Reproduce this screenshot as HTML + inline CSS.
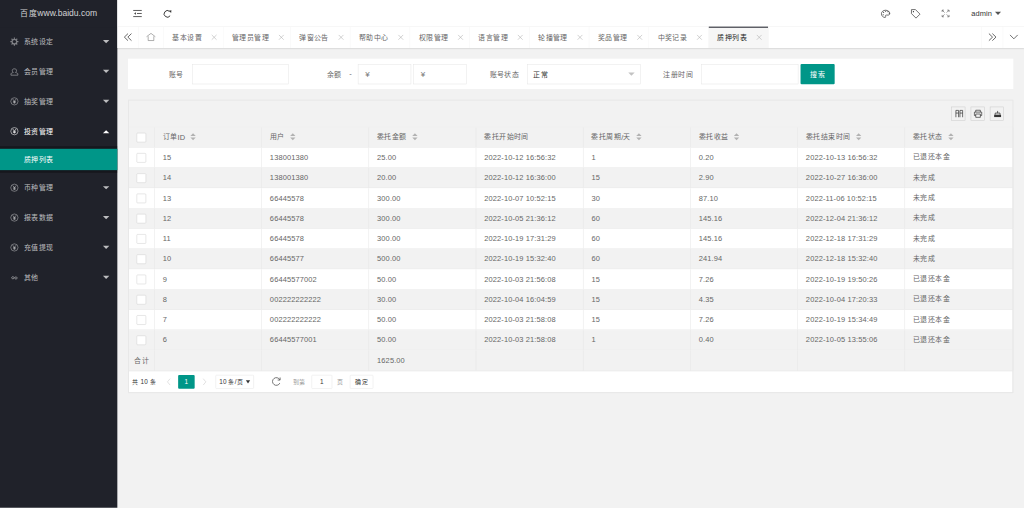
<!DOCTYPE html><html lang="zh-CN"><head><meta charset="utf-8"><style>
html,body{margin:0;padding:0;width:1024px;height:508px;overflow:hidden;background:#f2f2f2;}
#root{position:absolute;left:0;top:0;width:1920px;height:952px;transform:scale(0.533333);transform-origin:0 0;background:#f2f2f2;font-family:"Liberation Sans",sans-serif;font-size:14px;color:#666;}
.k{font-size:0.9286em;letter-spacing:0.0714em;position:relative;top:0;}
.cell .k{top:-0.8px;}
span{white-space:nowrap;}
.n{letter-spacing:0.22px;}
#logo .n{letter-spacing:0;}
#side{position:absolute;left:0;top:0;width:220px;height:952px;background:#20222a;}
#logo{position:absolute;left:0;top:0;width:220px;height:50px;line-height:50px;text-align:center;color:rgba(255,255,255,.8);font-size:16px;box-shadow:0 1px 2px 0 rgba(0,0,0,.15);}
.nav{position:absolute;left:0;width:220px;height:56px;line-height:56px;color:rgba(255,255,255,.7);}
.nav .t{position:absolute;left:45px;top:0;}
.caret{position:absolute;right:15px;top:25px;width:0;height:0;border:6px solid transparent;border-top-color:rgba(255,255,255,.7);border-bottom:none;}
.caret.up{border-top:none;border-bottom:6px solid #fff;top:26px;}
#child{position:absolute;left:0;top:274px;width:220px;height:50px;background:rgba(0,0,0,.3);}
#child .dd{position:absolute;left:0;top:5px;width:220px;height:40px;line-height:40px;background:#009688;color:#fff;}
#child .dd > span{position:absolute;left:45px;}
#header{position:absolute;left:220px;top:0;width:1700px;height:50px;background:#fff;border-bottom:1px solid #f6f6f6;box-sizing:border-box;}
#tabs{position:absolute;left:220px;top:50px;width:1700px;height:40px;background:#fff;box-shadow:0 1px 2px 0 rgba(0,0,0,.1);}
.tab{position:absolute;top:0;height:40px;line-height:40px;border-right:1px solid #f6f6f6;box-sizing:border-box;color:#666;}
.tab .t{position:absolute;left:16px;top:0;white-space:nowrap;}
.tab.sel{background:#f6f6f6;color:#222;}
.tab.sel:after{content:'';position:absolute;left:0;top:0;width:100%;height:2px;background:#292b34;}
.ctl{position:absolute;top:0;width:40px;height:40px;box-sizing:border-box;}
.card{position:absolute;background:#fff;}
.lbl{position:absolute;top:129px;line-height:20px;color:#666;white-space:nowrap;}
.inp{position:absolute;top:120px;height:38px;border:1px solid #e6e6e6;box-sizing:border-box;background:#fff;}
.btn{position:absolute;background:#009688;color:#fff;border-radius:2px;text-align:center;}
#tbl{position:absolute;left:240px;top:187px;width:1660px;height:550px;border:1px solid #e6e6e6;box-sizing:border-box;background:#fff;}
.row{position:absolute;left:0;width:1658px;height:37px;border-bottom:1px solid #e6e6e6;}
.cell{position:absolute;top:0;height:37px;line-height:37px;border-right:1px solid #e6e6e6;box-sizing:border-box;padding-left:16px;white-space:nowrap;}
.cb{position:absolute;left:15px;top:10px;width:18px;height:18px;border:1px solid #d2d2d2;box-sizing:border-box;background:#fff;border-radius:2px;}
.sort{display:inline-block;position:relative;width:10px;height:20px;margin-left:5px;vertical-align:middle;top:-1px;}
.sort:before{content:'';position:absolute;left:5px;top:2.5px;border:5px solid transparent;border-top:none;border-bottom-color:#b2b2b2;}
.sort:after{content:'';position:absolute;left:5px;bottom:4.5px;border:5px solid transparent;border-bottom:none;border-top-color:#b2b2b2;}
.tool-i{position:absolute;width:26px;height:26px;border:1px solid #ccc;box-sizing:border-box;}
.pg{position:absolute;font-size:12px;line-height:26px;top:702.5px;white-space:nowrap;color:#333;}
#icons{position:absolute;left:0;top:0;width:1920px;height:952px;overflow:visible;}
</style></head><body><div id="root"><div id="side"><div id="logo"><span class="k">百度</span><span class="n">www.baidu.com</span></div><div class="nav" style="top:50px;color:rgba(255,255,255,.7)"><span class="t"><span class="k">系统设定</span></span><i class="caret"></i></div><div class="nav" style="top:106px;color:rgba(255,255,255,.7)"><span class="t"><span class="k">会员管理</span></span><i class="caret"></i></div><div class="nav" style="top:162px;color:rgba(255,255,255,.7)"><span class="t"><span class="k">抽奖管理</span></span><i class="caret"></i></div><div class="nav" style="top:218px;color:#fff"><span class="t"><span class="k">投资管理</span></span><i class="caret up"></i></div><div class="nav" style="top:324px;color:rgba(255,255,255,.7)"><span class="t"><span class="k">币种管理</span></span><i class="caret"></i></div><div class="nav" style="top:380px;color:rgba(255,255,255,.7)"><span class="t"><span class="k">报表数据</span></span><i class="caret"></i></div><div class="nav" style="top:436px;color:rgba(255,255,255,.7)"><span class="t"><span class="k">充值提现</span></span><i class="caret"></i></div><div class="nav" style="top:492px;color:rgba(255,255,255,.7)"><span class="t"><span class="k">其他</span></span><i class="caret"></i></div><div id="child"><div class="dd"><span><span class="k">质押列表</span></span></div></div></div><div id="header"><span style="position:absolute;left:1601px;top:0;line-height:50px;color:#333"><span class="n">admin</span></span></div><div id="tabs"><div class="ctl" style="left:0;border-right:1px solid #f6f6f6"></div><div class="tab" style="left:40px;width:47px"></div><div class="tab" style="left:87px;width:112px"><span class="t"><span class="k">基本设置</span></span></div><div class="tab" style="left:199px;width:126px"><span class="t"><span class="k">管理员管理</span></span></div><div class="tab" style="left:325px;width:112px"><span class="t"><span class="k">弹窗公告</span></span></div><div class="tab" style="left:437px;width:112px"><span class="t"><span class="k">帮助中心</span></span></div><div class="tab" style="left:549px;width:112px"><span class="t"><span class="k">权限管理</span></span></div><div class="tab" style="left:661px;width:112px"><span class="t"><span class="k">语言管理</span></span></div><div class="tab" style="left:773px;width:112px"><span class="t"><span class="k">轮播管理</span></span></div><div class="tab" style="left:885px;width:112px"><span class="t"><span class="k">奖品管理</span></span></div><div class="tab" style="left:997px;width:112px"><span class="t"><span class="k">中奖记录</span></span></div><div class="tab sel" style="left:1109px;width:112px"><span class="t"><span class="k">质押列表</span></span></div><div class="ctl" style="left:1620px;border-left:1px solid #f6f6f6"></div><div class="ctl" style="left:1660px;border-left:1px solid #f6f6f6"></div></div><div class="card" style="left:240px;top:110px;width:1660px;height:57px"></div><span class="lbl" style="left:317px"><span class="k">账号</span></span><div class="inp" style="left:360px;width:181px"></div><span class="lbl" style="left:613px"><span class="k">余额</span></span><span class="lbl" style="left:655px;top:127.5px"><span class="n">-</span></span><div class="inp" style="left:671px;width:100px"><span style="position:absolute;left:13px;top:8px;line-height:20px;color:#777;font-size:15px"><span class="n">¥</span></span></div><div class="inp" style="left:775px;width:100px"><span style="position:absolute;left:13px;top:8px;line-height:20px;color:#777;font-size:15px"><span class="n">¥</span></span></div><span class="lbl" style="left:918px"><span class="k">账号状态</span></span><div class="inp" style="left:989px;width:212px"><span style="position:absolute;left:10px;top:8px;line-height:20px;color:#333"><span class="k">正常</span></span><i style="position:absolute;right:10px;top:15px;border:6px solid transparent;border-top:6px solid #c2c2c2;border-bottom:none"></i></div><span class="lbl" style="left:1244px"><span class="k">注册时间</span></span><div class="inp" style="left:1315px;width:182px"></div><div class="btn" style="left:1501px;top:120px;width:64px;height:38px;line-height:38px"><span class="k">搜索</span></div><div id="tbl"><div style="position:absolute;left:0;top:0;width:1658px;height:50px;background:#f2f2f2;border-bottom:1px solid #e6e6e6"></div><div class="tool-i" style="left:1543px;top:12px"></div><div class="tool-i" style="left:1579px;top:12px"></div><div class="tool-i" style="left:1615px;top:12px"></div><div class="row" style="top:51px;background:#f2f2f2;height:37px"><div class="cell" style="left:0;width:49px;height:37px;line-height:37px"><i class="cb"></i></div><div class="cell" style="left:48px;width:202px;height:37px;line-height:37px"><span class="k">订单</span><span class="n">ID</span><i class="sort"></i></div><div class="cell" style="left:249px;width:202px;height:37px;line-height:37px"><span class="k">用户</span><i class="sort"></i></div><div class="cell" style="left:450px;width:202px;height:37px;line-height:37px"><span class="k">委托金额</span><i class="sort"></i></div><div class="cell" style="left:651px;width:202px;height:37px;line-height:37px"><span class="k">委托开始时间</span></div><div class="cell" style="left:852px;width:202px;height:37px;line-height:37px"><span class="k">委托周期</span><span class="n">/</span><span class="k">天</span><i class="sort"></i></div><div class="cell" style="left:1053px;width:202px;height:37px;line-height:37px"><span class="k">委托收益</span><i class="sort"></i></div><div class="cell" style="left:1254px;width:202px;height:37px;line-height:37px"><span class="k">委托结束时间</span><i class="sort"></i></div><div class="cell" style="left:1455px;width:204px;height:37px;line-height:37px"><span class="k">委托状态</span><i class="sort"></i></div></div><div class="row" style="top:89px;background:#fff;height:37px"><div class="cell" style="left:0;width:49px;height:37px;line-height:37px"><i class="cb"></i></div><div class="cell" style="left:48px;width:202px;height:37px;line-height:37px"><span class="n">15</span></div><div class="cell" style="left:249px;width:202px;height:37px;line-height:37px"><span class="n">138001380</span></div><div class="cell" style="left:450px;width:202px;height:37px;line-height:37px"><span class="n">25.00</span></div><div class="cell" style="left:651px;width:202px;height:37px;line-height:37px"><span class="n">2022-10-12 16:56:32</span></div><div class="cell" style="left:852px;width:202px;height:37px;line-height:37px"><span class="n">1</span></div><div class="cell" style="left:1053px;width:202px;height:37px;line-height:37px"><span class="n">0.20</span></div><div class="cell" style="left:1254px;width:202px;height:37px;line-height:37px"><span class="n">2022-10-13 16:56:32</span></div><div class="cell" style="left:1455px;width:204px;height:37px;line-height:37px"><span class="k">已退还本金</span></div></div><div class="row" style="top:127px;background:#f2f2f2;height:37px"><div class="cell" style="left:0;width:49px;height:37px;line-height:37px"><i class="cb"></i></div><div class="cell" style="left:48px;width:202px;height:37px;line-height:37px"><span class="n">14</span></div><div class="cell" style="left:249px;width:202px;height:37px;line-height:37px"><span class="n">138001380</span></div><div class="cell" style="left:450px;width:202px;height:37px;line-height:37px"><span class="n">20.00</span></div><div class="cell" style="left:651px;width:202px;height:37px;line-height:37px"><span class="n">2022-10-12 16:36:00</span></div><div class="cell" style="left:852px;width:202px;height:37px;line-height:37px"><span class="n">15</span></div><div class="cell" style="left:1053px;width:202px;height:37px;line-height:37px"><span class="n">2.90</span></div><div class="cell" style="left:1254px;width:202px;height:37px;line-height:37px"><span class="n">2022-10-27 16:36:00</span></div><div class="cell" style="left:1455px;width:204px;height:37px;line-height:37px"><span class="k">未完成</span></div></div><div class="row" style="top:165px;background:#fff;height:37px"><div class="cell" style="left:0;width:49px;height:37px;line-height:37px"><i class="cb"></i></div><div class="cell" style="left:48px;width:202px;height:37px;line-height:37px"><span class="n">13</span></div><div class="cell" style="left:249px;width:202px;height:37px;line-height:37px"><span class="n">66445578</span></div><div class="cell" style="left:450px;width:202px;height:37px;line-height:37px"><span class="n">300.00</span></div><div class="cell" style="left:651px;width:202px;height:37px;line-height:37px"><span class="n">2022-10-07 10:52:15</span></div><div class="cell" style="left:852px;width:202px;height:37px;line-height:37px"><span class="n">30</span></div><div class="cell" style="left:1053px;width:202px;height:37px;line-height:37px"><span class="n">87.10</span></div><div class="cell" style="left:1254px;width:202px;height:37px;line-height:37px"><span class="n">2022-11-06 10:52:15</span></div><div class="cell" style="left:1455px;width:204px;height:37px;line-height:37px"><span class="k">未完成</span></div></div><div class="row" style="top:203px;background:#f2f2f2;height:37px"><div class="cell" style="left:0;width:49px;height:37px;line-height:37px"><i class="cb"></i></div><div class="cell" style="left:48px;width:202px;height:37px;line-height:37px"><span class="n">12</span></div><div class="cell" style="left:249px;width:202px;height:37px;line-height:37px"><span class="n">66445578</span></div><div class="cell" style="left:450px;width:202px;height:37px;line-height:37px"><span class="n">300.00</span></div><div class="cell" style="left:651px;width:202px;height:37px;line-height:37px"><span class="n">2022-10-05 21:36:12</span></div><div class="cell" style="left:852px;width:202px;height:37px;line-height:37px"><span class="n">60</span></div><div class="cell" style="left:1053px;width:202px;height:37px;line-height:37px"><span class="n">145.16</span></div><div class="cell" style="left:1254px;width:202px;height:37px;line-height:37px"><span class="n">2022-12-04 21:36:12</span></div><div class="cell" style="left:1455px;width:204px;height:37px;line-height:37px"><span class="k">未完成</span></div></div><div class="row" style="top:241px;background:#fff;height:37px"><div class="cell" style="left:0;width:49px;height:37px;line-height:37px"><i class="cb"></i></div><div class="cell" style="left:48px;width:202px;height:37px;line-height:37px"><span class="n">11</span></div><div class="cell" style="left:249px;width:202px;height:37px;line-height:37px"><span class="n">66445578</span></div><div class="cell" style="left:450px;width:202px;height:37px;line-height:37px"><span class="n">300.00</span></div><div class="cell" style="left:651px;width:202px;height:37px;line-height:37px"><span class="n">2022-10-19 17:31:29</span></div><div class="cell" style="left:852px;width:202px;height:37px;line-height:37px"><span class="n">60</span></div><div class="cell" style="left:1053px;width:202px;height:37px;line-height:37px"><span class="n">145.16</span></div><div class="cell" style="left:1254px;width:202px;height:37px;line-height:37px"><span class="n">2022-12-18 17:31:29</span></div><div class="cell" style="left:1455px;width:204px;height:37px;line-height:37px"><span class="k">未完成</span></div></div><div class="row" style="top:279px;background:#f2f2f2;height:37px"><div class="cell" style="left:0;width:49px;height:37px;line-height:37px"><i class="cb"></i></div><div class="cell" style="left:48px;width:202px;height:37px;line-height:37px"><span class="n">10</span></div><div class="cell" style="left:249px;width:202px;height:37px;line-height:37px"><span class="n">66445577</span></div><div class="cell" style="left:450px;width:202px;height:37px;line-height:37px"><span class="n">500.00</span></div><div class="cell" style="left:651px;width:202px;height:37px;line-height:37px"><span class="n">2022-10-19 15:32:40</span></div><div class="cell" style="left:852px;width:202px;height:37px;line-height:37px"><span class="n">60</span></div><div class="cell" style="left:1053px;width:202px;height:37px;line-height:37px"><span class="n">241.94</span></div><div class="cell" style="left:1254px;width:202px;height:37px;line-height:37px"><span class="n">2022-12-18 15:32:40</span></div><div class="cell" style="left:1455px;width:204px;height:37px;line-height:37px"><span class="k">未完成</span></div></div><div class="row" style="top:317px;background:#fff;height:37px"><div class="cell" style="left:0;width:49px;height:37px;line-height:37px"><i class="cb"></i></div><div class="cell" style="left:48px;width:202px;height:37px;line-height:37px"><span class="n">9</span></div><div class="cell" style="left:249px;width:202px;height:37px;line-height:37px"><span class="n">66445577002</span></div><div class="cell" style="left:450px;width:202px;height:37px;line-height:37px"><span class="n">50.00</span></div><div class="cell" style="left:651px;width:202px;height:37px;line-height:37px"><span class="n">2022-10-03 21:56:08</span></div><div class="cell" style="left:852px;width:202px;height:37px;line-height:37px"><span class="n">15</span></div><div class="cell" style="left:1053px;width:202px;height:37px;line-height:37px"><span class="n">7.26</span></div><div class="cell" style="left:1254px;width:202px;height:37px;line-height:37px"><span class="n">2022-10-19 19:50:26</span></div><div class="cell" style="left:1455px;width:204px;height:37px;line-height:37px"><span class="k">已退还本金</span></div></div><div class="row" style="top:355px;background:#f2f2f2;height:37px"><div class="cell" style="left:0;width:49px;height:37px;line-height:37px"><i class="cb"></i></div><div class="cell" style="left:48px;width:202px;height:37px;line-height:37px"><span class="n">8</span></div><div class="cell" style="left:249px;width:202px;height:37px;line-height:37px"><span class="n">002222222222</span></div><div class="cell" style="left:450px;width:202px;height:37px;line-height:37px"><span class="n">30.00</span></div><div class="cell" style="left:651px;width:202px;height:37px;line-height:37px"><span class="n">2022-10-04 16:04:59</span></div><div class="cell" style="left:852px;width:202px;height:37px;line-height:37px"><span class="n">15</span></div><div class="cell" style="left:1053px;width:202px;height:37px;line-height:37px"><span class="n">4.35</span></div><div class="cell" style="left:1254px;width:202px;height:37px;line-height:37px"><span class="n">2022-10-04 17:20:33</span></div><div class="cell" style="left:1455px;width:204px;height:37px;line-height:37px"><span class="k">已退还本金</span></div></div><div class="row" style="top:393px;background:#fff;height:37px"><div class="cell" style="left:0;width:49px;height:37px;line-height:37px"><i class="cb"></i></div><div class="cell" style="left:48px;width:202px;height:37px;line-height:37px"><span class="n">7</span></div><div class="cell" style="left:249px;width:202px;height:37px;line-height:37px"><span class="n">002222222222</span></div><div class="cell" style="left:450px;width:202px;height:37px;line-height:37px"><span class="n">50.00</span></div><div class="cell" style="left:651px;width:202px;height:37px;line-height:37px"><span class="n">2022-10-03 21:58:08</span></div><div class="cell" style="left:852px;width:202px;height:37px;line-height:37px"><span class="n">15</span></div><div class="cell" style="left:1053px;width:202px;height:37px;line-height:37px"><span class="n">7.26</span></div><div class="cell" style="left:1254px;width:202px;height:37px;line-height:37px"><span class="n">2022-10-19 15:34:49</span></div><div class="cell" style="left:1455px;width:204px;height:37px;line-height:37px"><span class="k">已退还本金</span></div></div><div class="row" style="top:431px;background:#f2f2f2;height:37px"><div class="cell" style="left:0;width:49px;height:37px;line-height:37px"><i class="cb"></i></div><div class="cell" style="left:48px;width:202px;height:37px;line-height:37px"><span class="n">6</span></div><div class="cell" style="left:249px;width:202px;height:37px;line-height:37px"><span class="n">66445577001</span></div><div class="cell" style="left:450px;width:202px;height:37px;line-height:37px"><span class="n">50.00</span></div><div class="cell" style="left:651px;width:202px;height:37px;line-height:37px"><span class="n">2022-10-03 21:58:08</span></div><div class="cell" style="left:852px;width:202px;height:37px;line-height:37px"><span class="n">1</span></div><div class="cell" style="left:1053px;width:202px;height:37px;line-height:37px"><span class="n">0.40</span></div><div class="cell" style="left:1254px;width:202px;height:37px;line-height:37px"><span class="n">2022-10-05 13:55:06</span></div><div class="cell" style="left:1455px;width:204px;height:37px;line-height:37px"><span class="k">已退还本金</span></div></div><div class="row" style="top:469px;background:#f2f2f2;height:38px"><div class="cell" style="left:0;width:49px;height:38px;line-height:38px"><span style="position:absolute;left:11px"><span class="k">合计</span></span></div><div class="cell" style="left:48px;width:202px;height:38px;line-height:38px"></div><div class="cell" style="left:249px;width:202px;height:38px;line-height:38px"></div><div class="cell" style="left:450px;width:202px;height:38px;line-height:38px"><span class="n">1625.00</span></div><div class="cell" style="left:651px;width:202px;height:38px;line-height:38px"></div><div class="cell" style="left:852px;width:202px;height:38px;line-height:38px"></div><div class="cell" style="left:1053px;width:202px;height:38px;line-height:38px"></div><div class="cell" style="left:1254px;width:202px;height:38px;line-height:38px"></div><div class="cell" style="left:1455px;width:204px;height:38px;line-height:38px"></div></div></div><span class="pg" style="left:248px"><span class="k">共</span><span class="n"> 10 </span><span class="k">条</span></span><div style="position:absolute;left:334px;top:702.5px;width:31px;height:26.5px;background:#009688;border-radius:2px;color:#fff;font-size:12px;line-height:26px;text-align:center"><span class="n">1</span></div><div style="position:absolute;left:404px;top:702.5px;width:72px;height:26.5px;border-radius:2px;border:1px solid #e6e6e6;box-sizing:border-box;background:#fff"></div><span class="pg" style="left:411px"><span class="n">10 </span><span class="k">条</span><span class="n">/</span><span class="k">页</span></span><i style="position:absolute;left:461px;top:713px;border:4px solid transparent;border-top:6px solid #333;border-bottom:none"></i><span class="pg" style="left:549px;color:#999"><span class="k">到第</span></span><div style="position:absolute;left:584px;top:702.5px;width:39px;height:26.5px;border-radius:2px;border:1px solid #e6e6e6;box-sizing:border-box;background:#fff;font-size:12px;line-height:24px;text-align:center;color:#333"><span class="n">1</span></div><span class="pg" style="left:632px;color:#999"><span class="k">页</span></span><div style="position:absolute;left:656px;top:702.5px;width:44px;height:26.5px;border-radius:2px;border:1px solid #e6e6e6;box-sizing:border-box;background:#fff;font-size:12px;line-height:24px;text-align:center;color:#333"><span class="k">确定</span></div><svg id="icons" viewBox="0 0 1920 952"><g transform="translate(19 70)" fill="none" stroke="rgba(255,255,255,.42)" stroke-width="1.3"><g transform="translate(8 8) scale(1.12) translate(-8 -8)"><circle cx="8" cy="8" r="3.9" stroke-width="2.1"/><g stroke-width="2"><path d="M8 1.2 V3.4" transform="rotate(0 8 8)"/><path d="M8 1.2 V3.4" transform="rotate(45 8 8)"/><path d="M8 1.2 V3.4" transform="rotate(90 8 8)"/><path d="M8 1.2 V3.4" transform="rotate(135 8 8)"/><path d="M8 1.2 V3.4" transform="rotate(180 8 8)"/><path d="M8 1.2 V3.4" transform="rotate(225 8 8)"/><path d="M8 1.2 V3.4" transform="rotate(270 8 8)"/><path d="M8 1.2 V3.4" transform="rotate(315 8 8)"/></g></g></g><g transform="translate(19 126)" fill="none" stroke="rgba(255,255,255,.55)" stroke-width="1.3"><path d="M4 6 C4 2 12 2 12 6 C12 8 11 9.2 10.2 9.6 V10 C13 10.5 14.5 11.5 14.5 13 V15 H1.5 V13 C1.5 11.5 3 10.5 5.8 10 V9.6 C5 9.2 4 8 4 6 Z" stroke-linejoin="round"/></g><g transform="translate(19 182)" fill="none" stroke="rgba(255,255,255,.55)" stroke-width="1.3"><circle cx="8" cy="8" r="6.8" stroke-width="1.2"/><path d="M4.8 3.8 L8 7.8 L11.2 3.8 M8 7.8 V12.4 M5.3 8.3 H10.7 M5.3 10.4 H10.7" stroke-width="1.4"/></g><g transform="translate(19 238)" fill="none" stroke="rgba(255,255,255,.85)" stroke-width="1.3"><circle cx="8" cy="8" r="6.8" stroke-width="1.2"/><path d="M4.8 3.8 L8 7.8 L11.2 3.8 M8 7.8 V12.4 M5.3 8.3 H10.7 M5.3 10.4 H10.7" stroke-width="1.4"/></g><g transform="translate(19 344)" fill="none" stroke="rgba(255,255,255,.55)" stroke-width="1.3"><circle cx="8" cy="8" r="6.8" stroke-width="1.2"/><path d="M4.8 3.8 L8 7.8 L11.2 3.8 M8 7.8 V12.4 M5.3 8.3 H10.7 M5.3 10.4 H10.7" stroke-width="1.4"/></g><g transform="translate(19 400)" fill="none" stroke="rgba(255,255,255,.55)" stroke-width="1.3"><circle cx="8" cy="8" r="6.8" stroke-width="1.2"/><path d="M4.8 3.8 L8 7.8 L11.2 3.8 M8 7.8 V12.4 M5.3 8.3 H10.7 M5.3 10.4 H10.7" stroke-width="1.4"/></g><g transform="translate(19 456)" fill="none" stroke="rgba(255,255,255,.55)" stroke-width="1.3"><circle cx="8" cy="8" r="6.8" stroke-width="1.2"/><path d="M4.8 3.8 L8 7.8 L11.2 3.8 M8 7.8 V12.4 M5.3 8.3 H10.7 M5.3 10.4 H10.7" stroke-width="1.4"/></g><g transform="translate(19 512)" fill="none" stroke="rgba(255,255,255,.55)" stroke-width="1.3"><path d="M8 9 C6.8 6.8 4.8 6.3 3.6 7.3 C2.6 8.1 2.7 9.7 3.8 10.4 C5 11.2 6.8 10.6 8 9 C9.2 7.4 11 6.8 12.2 7.6 C13.3 8.3 13.4 9.9 12.4 10.7 C11.2 11.7 9.2 11.2 8 9 Z" stroke-width="1.5"/></g><path d="M249.8 19.6 H265.8 M256.9 25.3 H265.8 M249.8 31.1 H265.8" stroke="#333" stroke-width="1.5" fill="none"/><path d="M251.5 25.3 L254.8 23 V27.6 Z" fill="#333"/><path d="M319 29.6 A6.2 6.2 0 1 1 317.9 21.25" stroke="#333" stroke-width="1.8" fill="none"/><path d="M316.5 20.3 L321.4 19.4 L320.9 24.4 Z" fill="#333"/><g transform="translate(1652 18.5)" fill="none" stroke="#333" stroke-width="1.3"><path d="M8.5 0.7 C4 0.7 0.7 3.6 0.7 7.3 C0.7 11.4 4 14.2 7.4 14.2 C8.8 14.2 9 13 8.4 12 C7.8 11 8.4 9.8 9.8 9.8 H13 C15.2 9.8 16.3 8.6 16.3 6.8 C16.3 3.3 12.8 0.7 8.5 0.7 Z" stroke-linejoin="round"/></g><circle cx="1656" cy="27.5" r="1" fill="#333"/><circle cx="1656.8" cy="23.2" r="1" fill="#333"/><circle cx="1660.6" cy="21" r="1" fill="#333"/><circle cx="1665" cy="21.8" r="1" fill="#333"/><circle cx="1667.4" cy="25" r="1" fill="#333"/><path d="M1709 18 H1716.5 L1725 26.5 L1717.5 34 L1709 25.5 Z" stroke="#333" stroke-width="1.3" fill="none" stroke-linejoin="round"/><circle cx="1712.7" cy="21.8" r="1.2" fill="#333"/><path d="M1766.5 22.5 V19 H1770.0 M1766.5 19 L1771.0 23.5" stroke="#555" stroke-width="1.1" fill="none"/><path d="M1779.5 22.5 V19 H1776.0 M1779.5 19 L1775.0 23.5" stroke="#555" stroke-width="1.1" fill="none"/><path d="M1766.5 28.0 V31.5 H1770.0 M1766.5 31.5 L1771.0 27.0" stroke="#555" stroke-width="1.1" fill="none"/><path d="M1779.5 28.0 V31.5 H1776.0 M1779.5 31.5 L1775.0 27.0" stroke="#555" stroke-width="1.1" fill="none"/><path d="M1865.5 21.8 H1877 L1871.25 28.3 Z" fill="#555"/><path d="M397.0 65.5 L406.0 74.5 M406.0 65.5 L397.0 74.5" stroke="#aaa" stroke-width="1" fill="none"/><path d="M523.0 65.5 L532.0 74.5 M532.0 65.5 L523.0 74.5" stroke="#aaa" stroke-width="1" fill="none"/><path d="M635.0 65.5 L644.0 74.5 M644.0 65.5 L635.0 74.5" stroke="#aaa" stroke-width="1" fill="none"/><path d="M747.0 65.5 L756.0 74.5 M756.0 65.5 L747.0 74.5" stroke="#aaa" stroke-width="1" fill="none"/><path d="M859.0 65.5 L868.0 74.5 M868.0 65.5 L859.0 74.5" stroke="#aaa" stroke-width="1" fill="none"/><path d="M971.0 65.5 L980.0 74.5 M980.0 65.5 L971.0 74.5" stroke="#aaa" stroke-width="1" fill="none"/><path d="M1083.0 65.5 L1092.0 74.5 M1092.0 65.5 L1083.0 74.5" stroke="#aaa" stroke-width="1" fill="none"/><path d="M1195.0 65.5 L1204.0 74.5 M1204.0 65.5 L1195.0 74.5" stroke="#aaa" stroke-width="1" fill="none"/><path d="M1307.0 65.5 L1316.0 74.5 M1316.0 65.5 L1307.0 74.5" stroke="#aaa" stroke-width="1" fill="none"/><path d="M1419.0 65.5 L1428.0 74.5 M1428.0 65.5 L1419.0 74.5" stroke="#aaa" stroke-width="1" fill="none"/><path d="M240 63 L233.2 69.6 L240 76.2 M246.5 63 L239.7 69.6 L246.5 76.2" stroke="#333" stroke-width="1.4" fill="none"/><path d="M274.8 68.8 L283.1 62.6 L291.2 68.8 M277.8 68 V76 H288.4 V68" stroke="#777" stroke-width="1.1" fill="none" stroke-linejoin="miter"/><path d="M1854.2 63 L1861 69.6 L1854.2 76.2 M1860.7 63 L1867.5 69.6 L1860.7 76.2" stroke="#333" stroke-width="1.4" fill="none"/><path d="M1893.8 65.5 L1901 72.8 L1908.2 65.5" stroke="#333" stroke-width="1.3" fill="none"/><g fill="none" stroke="#333" stroke-width="1.3"><path d="M1792.3 219.8 V207 H1797.3 V219.8 M1792.3 212 H1797.3 M1799.9 219.8 V207 H1804.9 V219.8 M1799.9 212 H1804.9"/><path d="M1829.5 210.2 V206.7 H1838.2 V210.2 M1829.5 216.6 H1827 V210.2 H1840.7 V216.6 H1838.2 M1829.5 213.8 H1838.2 V220 H1829.5 Z"/></g><path d="M1864 215 H1877 V219.5 H1864 Z" fill="#333"/><path d="M1866 215 V212 H1875 V215 M1870.5 212 V208" stroke="#333" stroke-width="1.4" fill="none"/><path d="M319 710 L314 716 L319 722" stroke="#d2d2d2" stroke-width="1.2" fill="none"/><path d="M381 710 L386 716 L381 722" stroke="#d2d2d2" stroke-width="1.2" fill="none"/><path d="M524.7 718.3 A7.2 7.2 0 1 1 524.7 712.3" stroke="#555" stroke-width="1.5" fill="none"/><path d="M520.6 712.6 H525.2 V707.8" stroke="#555" stroke-width="1.5" fill="none"/><rect x="240.9" y="187.9" width="1658.2" height="548.2" fill="none" stroke="#e8e8e8" stroke-width="1.8"/></svg></div></body></html>
